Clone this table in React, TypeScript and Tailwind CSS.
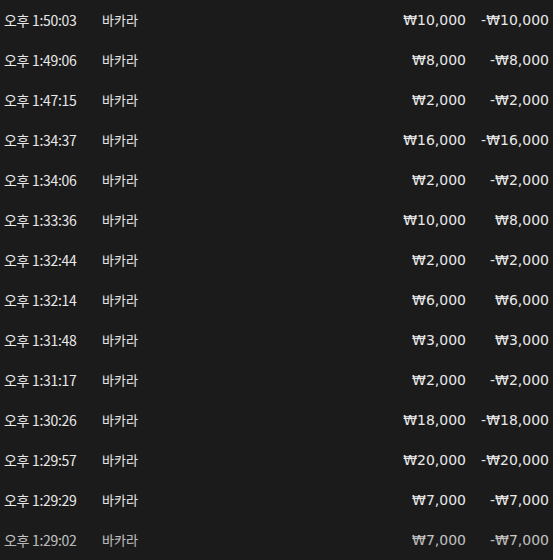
import React from "react";

const rows: [string, string, string][] = [
  ["오후 1:50:03", "₩10,000", "-₩10,000"],
  ["오후 1:49:06", "₩8,000", "-₩8,000"],
  ["오후 1:47:15", "₩2,000", "-₩2,000"],
  ["오후 1:34:37", "₩16,000", "-₩16,000"],
  ["오후 1:34:06", "₩2,000", "-₩2,000"],
  ["오후 1:33:36", "₩10,000", "₩8,000"],
  ["오후 1:32:44", "₩2,000", "-₩2,000"],
  ["오후 1:32:14", "₩6,000", "₩6,000"],
  ["오후 1:31:48", "₩3,000", "₩3,000"],
  ["오후 1:31:17", "₩2,000", "-₩2,000"],
  ["오후 1:30:26", "₩18,000", "-₩18,000"],
  ["오후 1:29:57", "₩20,000", "-₩20,000"],
  ["오후 1:29:29", "₩7,000", "-₩7,000"],
  ["오후 1:29:02", "₩7,000", "-₩7,000"],
];

export default function App() {
  return (
    <div
      className="relative w-[553px] h-[560px] overflow-hidden bg-[#1b1b1b] text-[#e8e8e8]"
      style={{ fontFamily: '"Noto Sans CJK KR", "Noto Sans", sans-serif' }}
    >
      <div className="flex flex-col">
        {rows.map(([t, bet, profit], i) => (
          <div key={i} className="flex items-center h-[40px] pl-[4px] pr-[4px]">
            <div className="w-[98px] text-[14px] tracking-[-0.3px]">{t}</div>
            <div className="flex-1 text-[13px]">바카라</div>
            <div
              className="text-right text-[14px]"
              style={{ fontFamily: '"DejaVu Sans", "Noto Sans CJK KR", sans-serif' }}
            >
              {bet}
            </div>
            <div
              className="w-[83px] text-right text-[14px]"
              style={{ fontFamily: '"DejaVu Sans", "Noto Sans CJK KR", sans-serif' }}
            >
              {profit}
            </div>
          </div>
        ))}
      </div>
      <div className="absolute left-0 right-0 bottom-0 h-[40px] bg-gradient-to-b from-transparent to-[#1b1b1b]/40 pointer-events-none" />
    </div>
  );
}
